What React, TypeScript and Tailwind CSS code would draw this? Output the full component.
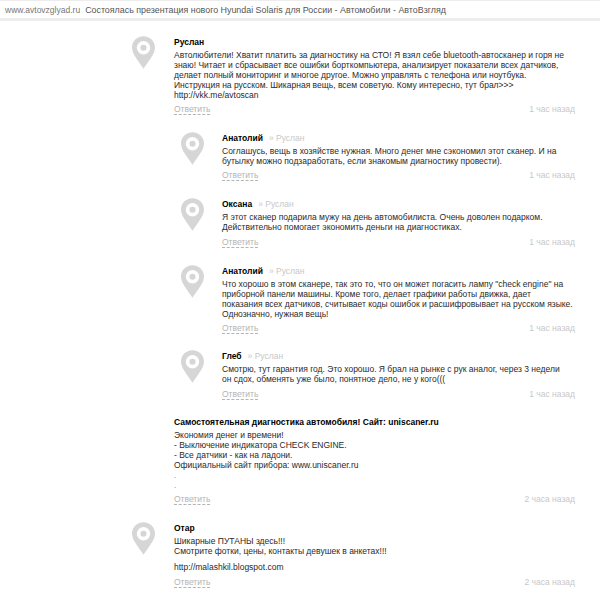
const Pin = () => (
  <svg width="23" height="33" viewBox="0 0 24 34" className="block shrink-0">
    <path fillRule="evenodd" fill="#d6d6d6" d="M12 0C5.200 0 0 5.200 0 11.800 0 19 7 26 12 34c5-8 12-15 12-22.200C24 5.200 18.800 0 12 0Zm0 5a7 7 0 1 1 0 14 7 7 0 0 1 0-14Z" />
    <circle cx="12" cy="12" r="3.200" fill="#d6d6d6" />
  </svg>
);

type C = { name: string; to?: string; lines: string[][]; time: string; gap?: string; dim?: boolean; foot?: string };

const Comment = ({ c, nested, bottom }: { c: C; nested?: boolean; bottom: string }) => (
  <div className={`flex ${nested ? "pl-[181px]" : "pl-[132px]"} pr-[25px] ${bottom}`}>
    <div className={`${nested ? "w-[41px]" : "w-[42px]"} shrink-0`}>{c.name.length < 40 && <Pin />}</div>
    <div className="flex-1 min-w-0">
      <div className="h-[10px] mt-[1px] leading-[10px] whitespace-nowrap">
        <span className="font-bold text-black">{c.name}</span>
        {c.to && <span className="text-[#c8c8c8] ml-[6px]">» {c.to}</span>}
      </div>
      <div className="mt-[3px]">
        {c.lines.map((p, i) => (
          <div key={i} className={i ? c.gap : ""}>
            {p.map((l, j) => (
              <div key={j} className={`h-[10px] leading-[10px] whitespace-nowrap ${c.dim && i ? "text-[#999]" : "text-[#2a2a2a]"}`}>{l}</div>
            ))}
          </div>
        ))}
      </div>
      <div className={`${c.foot ?? "mt-[4px]"} flex justify-between h-[11px] leading-[10px] text-[#b4b4b4]`}>
        <span className="border-b border-dashed border-[#b4b4b4]">Ответить</span>
        <span className="text-[#c8c8c8]">{c.time}</span>
      </div>
    </div>
  </div>
);

const main: C = { name: "Руслан", time: "1 час назад", lines: [[
  "Автолюбители! Хватит платить за диагностику на СТО! Я взял себе bluetooth-автосканер и горя не",
  "знаю! Читает и сбрасывает все ошибки борткомпьютера, анализирует показатели всех датчиков,",
  "делает полный мониторинг и многое другое. Можно управлять с телефона или ноутбука.",
  "Инструкция на русском. Шикарная вещь, всем советую. Кому интересно, тут брал>>>",
  "http://vkk.me/avtoscan",
]] };

const replies: C[] = [
  { name: "Анатолий", to: "Руслан", time: "1 час назад", lines: [[
    "Соглашусь, вещь в хозяйстве нужная. Много денег мне сэкономил этот сканер. И на",
    "бутылку можно подзаработать, если знакомым диагностику провести).",
  ]] },
  { name: "Оксана", to: "Руслан", time: "1 час назад", foot: "mt-[5px]", lines: [[
    "Я этот сканер подарила мужу на день автомобилиста. Очень доволен подарком.",
    "Действительно помогает экономить деньги на диагностиках.",
  ]] },
  { name: "Анатолий", to: "Руслан", time: "1 час назад", lines: [[
    "Что хорошо в этом сканере, так это то, что он может погасить лампу \"check engine\" на",
    "приборной панели машины. Кроме того, делает графики работы движка, дает",
    "показания всех датчиков, считывает коды ошибок и расшифровывает на русском языке.",
    "Однозначно, нужная вещь!",
  ]] },
  { name: "Глеб", to: "Руслан", time: "1 час назад", foot: "mt-[5px]", lines: [[
    "Смотрю, тут гарантия год. Это хорошо. Я брал на рынке с рук аналог, через 3 недели",
    "он сдох, обменять уже было, понятное дело, не у кого(((",
  ]] },
];

const uni: C = { name: "Самостоятельная диагностика автомобиля! Сайт: uniscaner.ru", time: "2 часа назад", dim: true, lines: [
  ["Экономия денег и времени!", "- Выключение индикатора CHECK ENGINE.", "- Все датчики - как на ладони.", "Официальный сайт прибора: www.uniscaner.ru"],
  [".", "."],
] };

const otar: C = { name: "Отар", time: "2 часа назад", gap: "mt-[6px]", foot: "mt-[5px]", lines: [
  ["Шикарные ПУТАНЫ здесь!!!", "Смотрите фотки, цены, контакты девушек в анкетах!!!"],
  ["http://malashkil.blogspot.com"],
] };

export default function App() {
  return (
    <div className="w-[600px] h-[592px] overflow-hidden bg-white text-[8.5px] font-['Liberation_Sans',Arial,sans-serif]">
      <div className="h-[21px] border-t border-b-[3px] border-[#ededed] pt-[4px] pl-[5px] leading-[11px] whitespace-nowrap">
        <span className="text-[#777] text-[8.5px]">www.avtovzglyad.ru</span>
        <span className="ml-[5px] text-[#555] text-[8.9px]">Состоялась презентация нового Hyundai Solaris для России - Автомобили - АвтоВзгляд</span>
      </div>
      <div className="pt-[15px]">
        <Comment c={main} bottom="pb-[17px]" />
        <Comment c={replies[0]} nested bottom="pb-[17px]" />
        <Comment c={replies[1]} nested bottom="pb-[17px]" />
        <Comment c={replies[2]} nested bottom="pb-[16px]" />
        <Comment c={replies[3]} nested bottom="pb-[16px]" />
        <Comment c={uni} bottom="pb-[17px]" />
        <Comment c={otar} bottom="" />
      </div>
    </div>
  );
}
